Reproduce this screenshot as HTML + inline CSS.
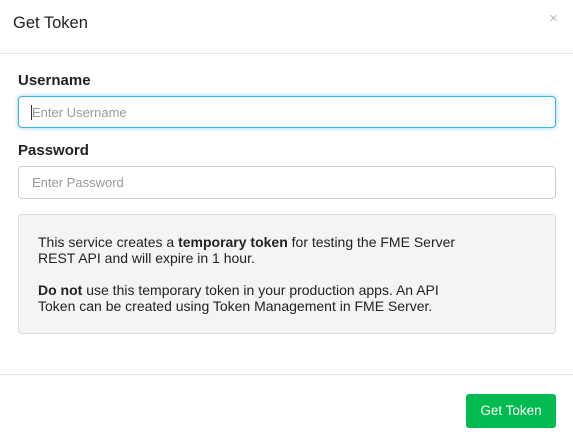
<!DOCTYPE html>
<html><head><style>
body{margin:0;width:573px;height:446px;background:#fff;font-family:"Liberation Sans",sans-serif;position:relative;overflow:hidden}
.a{position:absolute}
.title{left:13px;top:14px;font-size:16.5px;color:#222}
.x{left:549px;top:10px;font-size:15px;color:#bbb}
.hr{left:0;width:573px;height:1px;background:#e5e5e5}
.lbl{left:18px;font-size:15px;font-weight:bold;color:#222}
.inp{left:18px;width:536px;height:31px;border:1px solid #ccc;border-radius:4px;box-sizing:content-box}
.ph{left:13px;top:8px;font-size:13px;color:#999}
.box{left:18px;top:214px;width:536px;height:118px;background:#f4f4f4;border:1px solid #ddd;border-radius:3px;font-size:14px;line-height:16px;color:#222}
.btn{left:466px;top:394px;width:90px;height:34px;background:#00bb4f;border-radius:3px;color:#fff;font-size:13.5px;text-align:center;line-height:34px}
</style></head><body>
<div class="a title">Get Token</div>
<div class="a x">×</div>
<div class="a hr" style="top:53px"></div>
<div class="a lbl" style="top:72px">Username</div>
<div class="a inp" style="top:96px;height:30px;border-color:#3ab0e8;box-shadow:0 0 5px rgba(60,170,240,.55)"><div class="a ph">Enter Username</div><div class="a" style="left:12px;top:8px;width:1px;height:15px;background:#333"></div></div>
<div class="a lbl" style="top:142px">Password</div>
<div class="a inp" style="top:166px"><div class="a ph">Enter Password</div></div>
<div class="a box"><div style="position:absolute;left:19px;top:19px;width:440px">This service creates a <b>temporary token</b> for testing the FME Server REST API and will expire in 1 hour.<br><br><b>Do not</b> use this temporary token in your production apps. An API Token can be created using Token Management in FME Server.</div></div>
<div class="a hr" style="top:374px"></div>
<div class="a btn">Get Token</div>
</body></html>
